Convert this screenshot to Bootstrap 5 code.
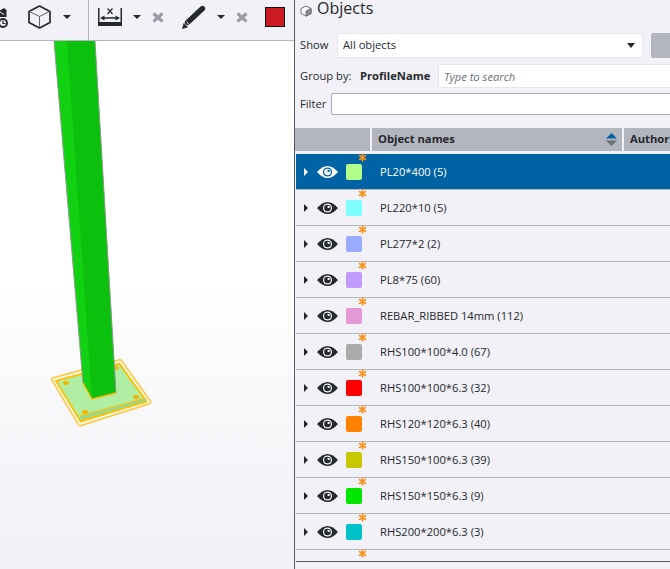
<!DOCTYPE html>
<html lang="en">
<head>
  <meta charset="UTF-8" />
  <meta name="viewport" content="width=device-width, initial-scale=1" />
  <link href="https://cdn.jsdelivr.net/npm/bootstrap@5.3.1/dist/css/bootstrap.min.css" rel="stylesheet" crossorigin="anonymous" />
  <title>Objects</title>
  <style>
    html, body {
      width: 670px;
      height: 569px;
      overflow: hidden;
    }
    body {
      font-family: "Open Sans", "Noto Sans", sans-serif;
      font-size: 11.2px;
      color: #25282d;
      background-color: #f1f1f7;
    }
    .view-pane {
      width: 294px;
      height: 569px;
      flex: none;
    }
    .tool-strip {
      position: relative;
      height: 41px;
      background-color: #f1f1f7;
      border-bottom: 1px solid #b4b6bf;
    }
    .tool-strip svg {
      display: block;
      position: absolute;
    }
    .model-canvas {
      height: 528px;
      background: linear-gradient(#fff 0%, #fff 45%, #f0f0f6 100%);
    }
    .model-canvas svg {
      display: block;
    }
    .side-panel {
      width: 376px;
      height: 569px;
      overflow: hidden;
      border-left: 1px solid #55585f;
    }
    .panel-title {
      height: 33px;
      padding: 1px 0 0 5px;
      font-size: 16px;
      line-height: 15px;
      gap: 5px;
    }
    .panel-title span {
      display: block;
    }
    .form-line {
      width: 520px;
      padding-left: 5px;
    }
    .form-line > span {
      flex: none;
    }
    .form-line .form-control,
    .form-line .form-select {
      font-family: inherit;
      font-size: 11.2px;
      border-radius: 2px;
      padding: 0 5px;
      color: #25282d;
      box-shadow: none;
      flex: none;
    }
    .show-line {
      height: 25px;
      margin-bottom: 6px;
    }
    .show-line > span:first-child {
      width: 37px;
    }
    .show-line .form-select {
      width: 306px;
      height: 25px;
      border: 1px solid #e6e6ee;
      background-image: none;
    }
    .form-line > .select-arrow {
      position: absolute;
      left: 332px;
      top: 10px;
      width: 0;
      height: 0;
      border-left: 4.5px solid transparent;
      border-right: 4.5px solid transparent;
      border-top: 5px solid #25282d;
    }
    .side-btn {
      width: 40px;
      height: 25px;
      margin-left: 8px;
      background-color: #b4b6bf;
      border-radius: 2px;
      flex: none;
    }
    .group-line {
      height: 24px;
      margin-bottom: 5px;
    }
    .group-line > span {
      width: 60px;
    }
    .group-line b {
      width: 78px;
      flex: none;
      font-weight: 700;
    }
    .group-line .form-control {
      width: 300px;
      height: 24px;
      border: 1px solid #e6e6ee;
      font-style: italic;
    }
    .group-line .form-control::placeholder {
      color: #6c6f76;
    }
    .filter-line {
      height: 22px;
      margin-bottom: 13px;
    }
    .filter-line > span {
      width: 31px;
    }
    .filter-line .form-control {
      width: 400px;
      height: 22px;
      border: 1px solid #a9abb3;
    }
    .head-row {
      height: 23px;
      gap: 2px;
      margin-bottom: 3px;
      font-weight: 700;
    }
    .head-cell {
      background-color: #b4b6bf;
      height: 23px;
      padding-left: 6px;
      flex: none;
    }
    .sort-mark {
      position: absolute;
      right: 5px;
      top: 5px;
    }
    .obj-row {
      height: 36px;
      margin-left: 1px;
      border-bottom: 1px solid #b4b6bf;
      position: relative;
    }
    .obj-row.picked {
      background-color: #0063a3;
      color: #fff;
    }
    .row-caret {
      margin-left: 8px;
      width: 0;
      height: 0;
      flex: none;
      border-top: 4px solid transparent;
      border-bottom: 4px solid transparent;
      border-left: 4px solid #25282d;
    }
    .picked .row-caret {
      border-left-color: #fff;
    }
    .row-eye {
      margin-left: 9px;
      flex: none;
    }
    .row-swatch {
      width: 16px;
      height: 16px;
      margin-left: 8px;
      border-radius: 2px;
      flex: none;
    }
    .row-name {
      margin-left: 18px;
      margin-top: 1px;
    }
    .row-star {
      position: absolute;
      left: 62px;
      top: -1px;
    }
    .list-end {
      height: 12px;
      margin-left: 1px;
      border-bottom: 1px solid #55585f;
      position: relative;
    }
  </style>
</head>
<body>
  <div class="d-flex">
    <!-- left: 3d view -->
    <div class="view-pane">
      <div class="tool-strip">
        <svg style="left:0;top:7px" width="9" height="22" viewBox="0 0 9 22">
          <path d="M0 3.5 L4 1 L6.5 3 V10 H0 Z" fill="#25282d"/>
          <path d="M0 5 L4 7.5" stroke="#f1f1f7" stroke-width="1"/>
          <circle cx="3" cy="16" r="4" fill="none" stroke="#25282d" stroke-width="1.9"/>
          <path d="M3 13.5 V16.5 H5.5" fill="none" stroke="#25282d" stroke-width="1.2"/>
        </svg>
        <svg style="left:28px;top:5px" width="23" height="24" viewBox="0 0 23 24" fill="none" stroke-linejoin="round">
          <path d="M11.5 1 L22 6.5 V17.5 L11.5 23 L1 17.5 V6.5 Z" stroke="#25282d" stroke-width="1.7"/>
          <path d="M1.5 6.5 L11.5 11.5 L21.5 6.5 M11.5 11.5 V22.5" stroke="#5f6269" stroke-width="1"/>
        </svg>
        <svg style="left:63px;top:15px" width="8" height="4"><path d="M0 0 H8 L4 4 Z" fill="#25282d"/></svg>
        <svg style="left:88px;top:0" width="1" height="40"><rect width="1" height="40" fill="#b4b6bf"/></svg>
        <svg style="left:98px;top:8px" width="24" height="18" viewBox="0 0 24 18">
          <rect x="0" y="14" width="24" height="4" fill="#25282d"/>
          <rect x="0" y="0" width="1.5" height="14" fill="#25282d"/>
          <rect x="22.5" y="0" width="1.5" height="14" fill="#25282d"/>
          <path d="M2 10 L6.5 7.5 V9.3 H17.5 V7.5 L22 10 L17.5 12.5 V10.7 H6.5 V12.5 Z" fill="#25282d"/>
          <path d="M9.5 0.5 L14.5 6 M14.5 0.5 L9.5 6" stroke="#25282d" stroke-width="1.2"/>
        </svg>
        <svg style="left:133px;top:15px" width="8" height="4"><path d="M0 0 H8 L4 4 Z" fill="#25282d"/></svg>
        <svg style="left:152px;top:12px" width="12" height="11"><path d="M1.5 1.5 L10.5 9.5 M10.5 1.5 L1.5 9.5" stroke="#9b9da6" stroke-width="3.2"/></svg>
        <svg style="left:182px;top:5px" width="24" height="24" viewBox="0 0 24 24">
          <path d="M5.5 17.5 L20.5 3.5" stroke="#25282d" stroke-width="5.4" stroke-linecap="round"/>
          <path d="M4.5 16.5 L7.5 20" stroke="#f1f1f7" stroke-width="1" />
          <path d="M0 24 L1.7 18 L6 22.3 Z" fill="#25282d"/>
        </svg>
        <svg style="left:217px;top:15px" width="8" height="4"><path d="M0 0 H8 L4 4 Z" fill="#25282d"/></svg>
        <svg style="left:236px;top:12px" width="12" height="11"><path d="M1.5 1.5 L10.5 9.5 M10.5 1.5 L1.5 9.5" stroke="#9b9da6" stroke-width="3.2"/></svg>
        <svg style="left:265px;top:7px" width="20" height="20"><rect x=".5" y=".5" width="19" height="19" fill="#cc1a22" stroke="#111"/></svg>
      </div>
      <div class="model-canvas">
        <!-- viewBox keeps screenshot coordinates -->
        <svg width="294" height="528" viewBox="0 41 294 528">
          <polygon points="53.5,379.5 120,361.5 149,402 80,424" fill="#fff" stroke="#ffc944" stroke-width="5" stroke-linejoin="round"/>
          <polygon points="53.5,379.5 120,361.5 149,402 80,424" fill="none" stroke="#fff" stroke-width="1.6"/>
          <polygon points="56,381 119.5,364 146.5,401.5 80.5,421" fill="#b2eda4" stroke="#ffc000" stroke-width="1.7"/>
          <polygon points="80,416 146,398 146.5,401.5 80.5,421" fill="#97d88e"/>
          <path d="M80 416 L146 398" stroke="#ffc000" stroke-width="1.1"/>
          <path d="M80.5 421 L146.5 401.5" stroke="#ffc000" stroke-width="1.7"/>
          <ellipse cx="66" cy="383" rx="3" ry="2" fill="#f5b400"/>
          <ellipse cx="85" cy="412" rx="3" ry="2" fill="#f5b400"/>
          <ellipse cx="136" cy="397" rx="3" ry="2" fill="#f5b400"/>
          <ellipse cx="116.5" cy="368" rx="2.5" ry="1.8" fill="#f5b400"/>
          <polygon points="54,41 95,41 116,393 92,399 83,383" fill="#12d012"/>
          <polygon points="67,41 95,41 116,393 92,399" fill="#0cc00e"/>
          <path d="M54 41 L83 383" fill="none" stroke="#8a9f8b" stroke-width="1"/>
          <path d="M95 41 L116 393" fill="none" stroke="#8a9f8b" stroke-width="1"/>
          <path d="M83 383 L92 399 L116 393" fill="none" stroke="#ffb400" stroke-width="1.3"/>
        </svg>
      </div>
    </div>

    <!-- right: objects panel -->
    <div class="side-panel">
      <div class="panel-title d-flex align-items-start">
        <svg class="mt-1" width="12" height="12" viewBox="0 0 12 12" fill="#fff" stroke="#6c6f76" stroke-width="1">
          <path d="M6 1 L11 3.5 V8.5 L6 11 L1 8.5 V3.5 Z"/>
          <path d="M6 6 L11 3.5 V8.5 L6 11 Z" fill="#8b8d95"/>
        </svg>
        <span>Objects</span>
      </div>
      <div class="form-line show-line d-flex align-items-center position-relative">
        <span>Show</span>
        <select class="form-select"><option>All objects</option></select>
        <span class="select-arrow"></span>
        <div class="side-btn"></div>
      </div>
      <div class="form-line group-line d-flex align-items-center">
        <span>Group by:</span>
        <b>ProfileName</b>
        <input type="text" class="form-control" placeholder="Type to search" />
      </div>
      <div class="form-line filter-line d-flex align-items-center">
        <span>Filter</span>
        <input type="text" class="form-control" />
      </div>
      <div class="head-row d-flex">
        <div class="head-cell" style="width:75px"></div>
        <div class="head-cell d-flex align-items-center position-relative" style="width:250px">
          Object names
          <svg class="sort-mark" width="11" height="13" viewBox="0 0 11 13">
            <path d="M5.5 0 L11 5.5 H0 Z" fill="#0063a3"/>
            <path d="M0 7.5 H11 L5.5 13 Z" fill="#6c6f76"/>
          </svg>
        </div>
        <div class="head-cell d-flex align-items-center" style="width:60px">Author</div>
      </div>
      <div id="obj_rows"></div>
      <div class="list-end" id="list_end"></div>
    </div>
  </div>

  <script>
    const obj_data = [
      { name: "PL20*400 (5)", color: "#b2ff8c" },
      { name: "PL220*10 (5)", color: "#80ffff" },
      { name: "PL277*2 (2)", color: "#99aaff" },
      { name: "PL8*75 (60)", color: "#c199ff" },
      { name: "REBAR_RIBBED 14mm (112)", color: "#e299d4" },
      { name: "RHS100*100*4.0 (67)", color: "#aaaaaa" },
      { name: "RHS100*100*6.3 (32)", color: "#ff0000" },
      { name: "RHS120*120*6.3 (40)", color: "#ff8000" },
      { name: "RHS150*100*6.3 (39)", color: "#c8c800" },
      { name: "RHS150*150*6.3 (9)", color: "#00e600" },
      { name: "RHS200*200*6.3 (3)", color: "#00c0c8" }
    ];

    const star_svg = '<svg class="row-star" width="9" height="9" viewBox="0 0 9 9"><path d="M4.5 0.5 V8.5 M1 2.3 L8 6.7 M8 2.3 L1 6.7" stroke="#f7941d" stroke-width="1.7"/></svg>';

    // 행 추가
    const obj_rows = document.getElementById("obj_rows");
    obj_data.forEach((item, i) => {
      const ink = i === 0 ? "#fff" : "#25282d";
      const back = i === 0 ? "#0063a3" : "#f1f1f7";
      const row = document.createElement("div");
      row.className = "obj-row d-flex align-items-center" + (i === 0 ? " picked" : "");
      row.innerHTML =
        '<span class="row-caret"></span>' +
        '<svg class="row-eye" width="21" height="12" viewBox="0 0 21 12">' +
        '<path d="M0 6 Q10.5 -6 21 6 Q10.5 18 0 6 Z" fill="' + ink + '"/>' +
        '<circle cx="10.5" cy="6" r="4.6" fill="' + back + '"/>' +
        '<circle cx="10.5" cy="6" r="3.3" fill="' + ink + '"/>' +
        '<circle cx="11.6" cy="4.9" r="1.2" fill="' + back + '"/></svg>' +
        '<span class="row-swatch" style="background-color:' + item.color + '"></span>' +
        '<span class="row-name">' + item.name + '</span>' + star_svg;
      obj_rows.appendChild(row);
    });
    document.getElementById("list_end").innerHTML = star_svg;
  </script>

  <script src="https://cdn.jsdelivr.net/npm/bootstrap@5.3.1/dist/js/bootstrap.bundle.min.js"></script>
</body>
</html>
